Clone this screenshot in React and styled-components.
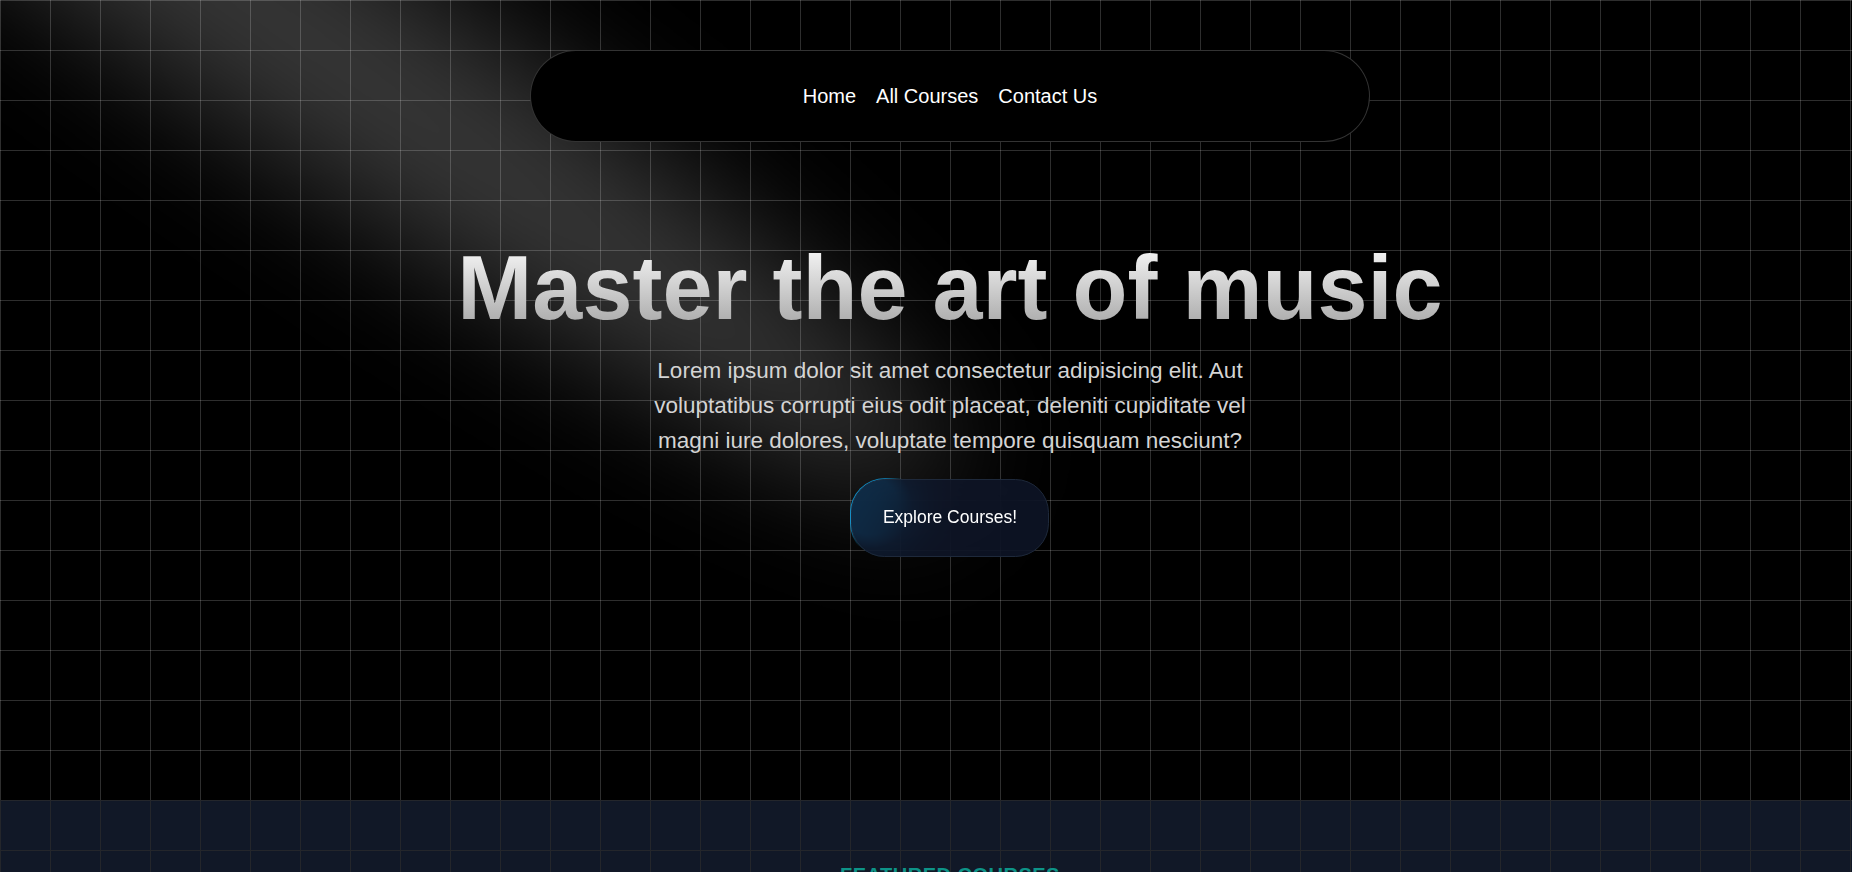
import React from 'react';
import styled, { createGlobalStyle } from 'styled-components';

const GlobalStyle = createGlobalStyle`
  html, body {
    margin: 0;
    padding: 0;
    background: #000;
    overflow: hidden;
  }
  * {
    box-sizing: border-box;
  }
  body {
    font-family: "Liberation Sans", Arial, Helvetica, sans-serif;
    -webkit-font-smoothing: antialiased;
  }
`;

const gridLines = (color) => `
  background-image:
    linear-gradient(to right, ${color} 1px, transparent 1px),
    linear-gradient(to bottom, ${color} 1px, transparent 1px);
  background-size: 50px 50px;
`;

const Page = styled.div`
  position: relative;
  width: 1900px;
  min-height: 100vh;
  background-color: #000;
  ${gridLines('rgba(255, 255, 255, 0.18)')}
`;

const NavBar = styled.nav`
  position: absolute;
  top: 50px;
  left: 0;
  right: 0;
  z-index: 50;
  max-width: 840px;
  margin: 0 auto;
  display: flex;
  justify-content: center;
  gap: 20px;
  padding: 30px 40px;
  border: 1px solid rgba(255, 255, 255, 0.2);
  border-radius: 9999px;
  background: #000;
`;

const NavLink = styled.a`
  color: #fff;
  font-size: 20px;
  line-height: 30px;
  text-decoration: none;
  cursor: pointer;
`;

const Hero = styled.section`
  position: relative;
  height: 800px;
  width: 100%;
  overflow: hidden;
  display: flex;
  flex-direction: column;
  align-items: center;
  justify-content: center;
`;

const SpotlightSvg = styled.svg`
  position: absolute;
  top: 0;
  left: 0;
  z-index: 1;
  width: 1900px;
  height: 800px;
  overflow: visible;
  pointer-events: none;
`;

const HeroContent = styled.div`
  position: relative;
  z-index: 10;
  width: 100%;
  padding: 20px;
  text-align: center;
`;

const Title = styled.h1`
  margin: 0;
  font-size: 90px;
  line-height: 1;
  font-weight: 700;
  background: linear-gradient(to bottom, #fafafa, #a3a3a3);
  -webkit-background-clip: text;
  background-clip: text;
  color: transparent;
`;

const Lead = styled.p`
  margin: 20px auto 0;
  max-width: 640px;
  font-size: 22.5px;
  line-height: 35px;
  font-weight: 400;
  color: #d4d4d4;
`;

const Actions = styled.div`
  margin-top: 20px;
  display: flex;
  justify-content: center;
`;

const GlowButton = styled.a`
  position: relative;
  display: block;
  width: 200px;
  height: 80px;
  padding: 1px;
  border-radius: 35px;
  overflow: hidden;
  background: transparent;
  cursor: pointer;
  text-decoration: none;
`;

const Glow = styled.span`
  position: absolute;
  left: -30px;
  top: -22px;
  width: 100px;
  height: 100px;
  opacity: 0.8;
  background: radial-gradient(#0ea5e9 40%, transparent 60%);
`;

const ButtonFace = styled.span`
  position: relative;
  display: flex;
  align-items: center;
  justify-content: center;
  width: 100%;
  height: 100%;
  border: 1px solid #1e293b;
  border-radius: 33.6px;
  background: rgba(15, 23, 42, 0.8);
  backdrop-filter: blur(24px);
  color: #fff;
  font-size: 17.5px;
`;

const Featured = styled.section`
  position: relative;
  padding: 60px 0;
  background-color: #111827;
  ${gridLines('#24262b')}
  text-align: center;
`;

const Eyebrow = styled.h2`
  margin: 0;
  font-size: 20px;
  line-height: 30px;
  font-weight: 700;
  letter-spacing: 0.5px;
  text-transform: uppercase;
  color: #0d9488;
`;

const SectionTitle = styled.p`
  margin: 10px 0 0;
  font-size: 45px;
  line-height: 50px;
  font-weight: 800;
  color: #fff;
`;

const Spotlight = () => (
  <SpotlightSvg viewBox="0 0 1900 800" fill="none">
    <defs>
      <filter
        id="spotBlur"
        x="-1200"
        y="-1200"
        width="4200"
        height="3200"
        filterUnits="userSpaceOnUse"
      >
        <feGaussianBlur stdDeviation="63" />
      </filter>
    </defs>
    <ellipse
      cx="300"
      cy="35"
      rx="790"
      ry="112"
      transform="rotate(34.7 300 35)"
      fill="white"
      fillOpacity="0.21"
      filter="url(#spotBlur)"
    />
  </SpotlightSvg>
);

const App = () => (
  <Page>
    <GlobalStyle />
    <NavBar>
      <NavLink>Home</NavLink>
      <NavLink>All Courses</NavLink>
      <NavLink>Contact Us</NavLink>
    </NavBar>
    <Hero>
      <Spotlight />
      <HeroContent>
        <Title>Master the art of music</Title>
        <Lead>
          Lorem ipsum dolor sit amet consectetur adipisicing elit. Aut
          voluptatibus corrupti eius odit placeat, deleniti cupiditate vel
          magni iure dolores, voluptate tempore quisquam nesciunt?
        </Lead>
        <Actions>
          <GlowButton>
            <Glow />
            <ButtonFace>Explore Courses!</ButtonFace>
          </GlowButton>
        </Actions>
      </HeroContent>
    </Hero>
    <Featured>
      <Eyebrow>Featured Courses</Eyebrow>
      <SectionTitle>Learn With the Best</SectionTitle>
    </Featured>
  </Page>
);

export default App;
